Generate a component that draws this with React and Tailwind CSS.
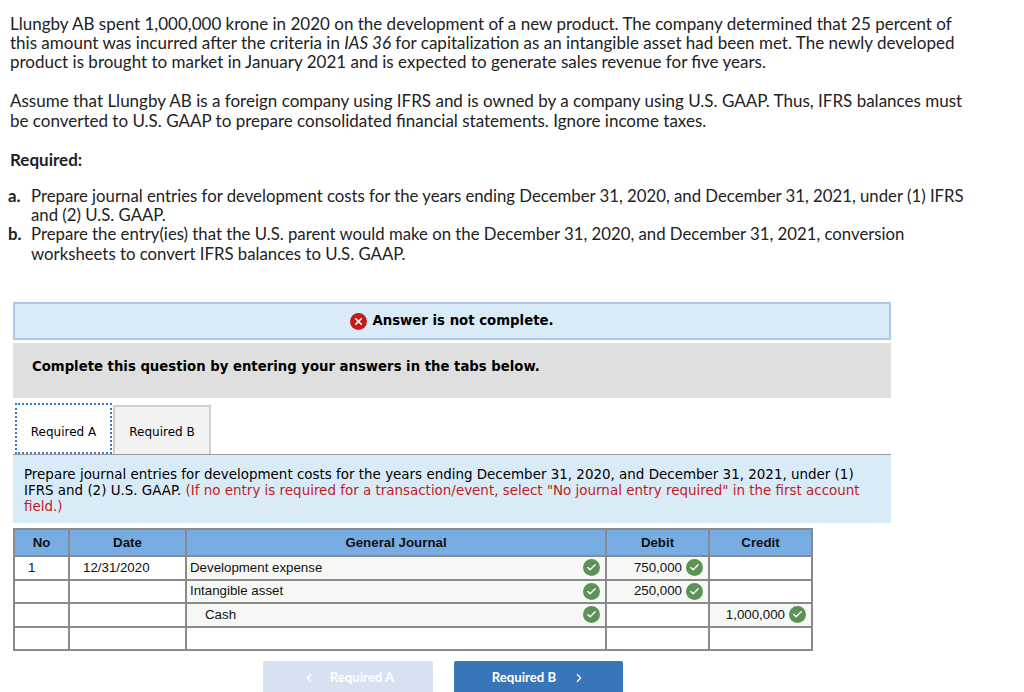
import React from "react";
import { Check, ChevronLeft, ChevronRight, X } from "lucide-react";

const rows = [
  { no: "1", date: "12/31/2020", account: "Development expense", debit: "750,000", credit: "", ok: true },
  { no: "", date: "", account: "Intangible asset", debit: "250,000", credit: "", ok: true },
  { no: "", date: "", account: "Cash", indent: true, debit: "", credit: "1,000,000", ok: true },
  { no: "", date: "", account: "", debit: "", credit: "", ok: false },
];

function Tick() {
  return (
    <span className="w-[17px] h-[17px] rounded-full bg-[#5b9357] flex items-center justify-center shrink-0">
      <Check size={11} strokeWidth={3} className="text-white" />
    </span>
  );
}

function Money({ value }) {
  if (!value) return null;
  return (
    <div className="flex items-center justify-end gap-[4px] pr-[5px]">
      <span>{value}</span>
      <Tick />
    </div>
  );
}

export default function App() {
  return (
    <div className="h-[692px] overflow-hidden bg-white text-black font-['Liberation_Sans',sans-serif]">
      <div className="h-[302px] pl-[10px] pt-[13.5px] pr-[49px] font-['Lato',sans-serif] text-[17px] leading-[19.4px] text-[#222]">
        <p>
          Llungby AB spent 1,000,000 krone in 2020 on the development of a new product. The company determined that 25 percent of this amount was incurred after the criteria in <em>IAS 36</em> for capitalization as an intangible asset had been met. The newly developed product is brought to market in January 2021 and is expected to generate sales revenue for five years.
        </p>
        <p className="mt-[19.5px]">
          Assume that Llungby AB is a foreign company using IFRS and is owned by a company using U.S. GAAP. Thus, IFRS balances must be converted to U.S. GAAP to prepare consolidated financial statements. Ignore income taxes.
        </p>
        <p className="mt-[19.5px] font-bold">Required:</p>
        <div className="mt-[17px] -ml-[2px] grid grid-cols-[23px_1fr] text-[16.75px] leading-[19.2px]">
          <b>a.</b>
          <p>Prepare journal entries for development costs for the years ending December 31, 2020, and December 31, 2021, under (1) IFRS and (2) U.S. GAAP.</p>
          <b>b.</b>
          <p>Prepare the entry(ies) that the U.S. parent would make on the December 31, 2020, and December 31, 2021, conversion worksheets to convert IFRS balances to U.S. GAAP.</p>
        </div>
      </div>

      <div className="ml-[13px] w-[878px] font-['DejaVu_Sans',sans-serif] text-[13.45px]">
        <div className="h-[38px] bg-[#d9ebf7] border-2 border-[#a9c9e6] flex items-center justify-center gap-[5px] font-bold text-[13.3px]">
          <span className="w-[17px] h-[17px] rounded-full bg-[#c01c1c] flex items-center justify-center">
            <X size={11} strokeWidth={3.5} className="text-white" />
          </span>
          Answer is not complete.
        </div>
        <div className="mt-[3px] h-[55px] bg-[#dfdfdf] flex items-center pl-[19px] pb-[8px] font-bold text-[13.25px]">
          Complete this question by entering your answers in the tabs below.
        </div>
        <div className="mt-[5px] h-[51px] flex items-end pl-[2px] text-[12px]">
          <div className="h-[51px] w-[97px] pt-[7px] bg-white border-2 border-dotted border-[#3b78c2] flex items-center justify-center">
            Required A
          </div>
          <div className="h-[49px] w-[98px] ml-[1px] pt-[3px] bg-[#f2f2f2] border-2 border-b-0 border-[#cfcfcf] flex items-center justify-center">
            Required B
          </div>
        </div>
        <div className="h-[69px] bg-[#d9ebf7] border-t border-[#999] pt-[12px] pl-[11px] pr-[10px] leading-[16px]">
          Prepare journal entries for development costs for the years ending December 31, 2020, and December 31, 2021, under (1) IFRS and (2) U.S. GAAP. <span className="text-[#c01c1c]">(If no entry is required for a transaction/event, select "No journal entry required" in the first account field.)</span>
        </div>
      </div>

      <table className="ml-[13px] mt-[5px] w-[798px] table-fixed border-collapse text-[13.3px] text-[#111]">
        <colgroup>
          <col className="w-[55px]" />
          <col className="w-[117px]" />
          <col className="w-[420px]" />
          <col className="w-[103px]" />
          <col className="w-[103px]" />
        </colgroup>
        <thead>
          <tr className="h-[27px] bg-[#78ade3] font-bold">
            <th className="border-2 border-[#8a8a8a]">No</th>
            <th className="border-2 border-[#8a8a8a]">Date</th>
            <th className="border-2 border-[#8a8a8a]">General Journal</th>
            <th className="border-2 border-[#8a8a8a]">Debit</th>
            <th className="border-2 border-[#8a8a8a]">Credit</th>
          </tr>
        </thead>
        <tbody>
          {rows.map((row, i) => (
            <tr key={i} className="h-[23.5px]">
              <td className="border-2 border-[#8a8a8a] pl-[13px]">{row.no}</td>
              <td className="border-2 border-[#8a8a8a] pl-[13px]">{row.date}</td>
              <td className={`border-2 border-[#8a8a8a] ${row.ok ? "bg-[#f6f8f6]" : ""}`}>
                <div className="flex items-center justify-between pr-[5px] pl-[3px]">
                  <span className={row.indent ? "pl-[15px]" : ""}>{row.account}</span>
                  {row.ok && <Tick />}
                </div>
              </td>
              <td className={`border-2 border-[#8a8a8a] ${row.debit ? "bg-[#f6f8f6]" : ""}`}>
                <Money value={row.debit} />
              </td>
              <td className={`border-2 border-[#8a8a8a] ${row.credit ? "bg-[#f6f8f6]" : ""}`}>
                <Money value={row.credit} />
              </td>
            </tr>
          ))}
        </tbody>
      </table>

      <div className="ml-[263px] mt-[10px] flex gap-[21px] text-[13.2px] font-bold text-white font-['Lato',sans-serif]">
        <div className="w-[170px] h-[34px] pb-[1px] rounded-t-[2px] bg-[#d6e2f1] flex items-center justify-center gap-[14px]">
          <ChevronLeft size={14} />
          <span>Required A</span>
        </div>
        <div className="w-[169px] h-[34px] pb-[1px] pl-[1px] rounded-t-[2px] bg-[#3875b9] flex items-center justify-center gap-[16px]">
          <span>Required B</span>
          <ChevronRight size={14} />
        </div>
      </div>
    </div>
  );
}
